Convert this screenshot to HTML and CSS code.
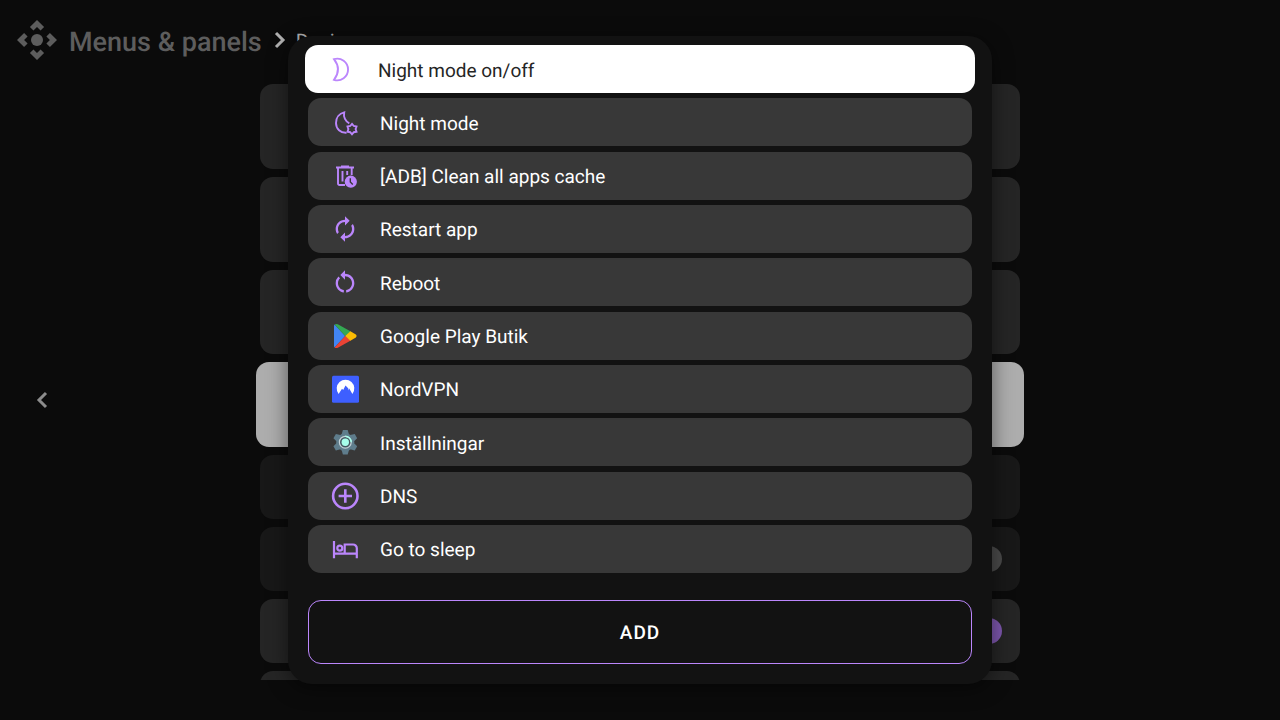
FILE: index.html
```html
<!DOCTYPE html>
<html lang="sv">
<head>
    <meta charset="UTF-8">
    <meta name="viewport" content="width=device-width, initial-scale=1.0">
    <title>Menus &amp; panels</title>
    <link rel="stylesheet" href="styles.css">
</head>
<body>
    <!-- Page behind the dialog -->
    <header class="header">
        <svg class="header-icon" viewBox="0 0 24 24" aria-hidden="true">
            <path d="M15.54 5.54L13.77 7.3 12 5.54 10.23 7.3 8.46 5.54 12 2zm2.92 10l-1.76-1.77L18.46 12l-1.76-1.77 1.76-1.77L22 12zm-10 2.92l1.77-1.76L12 18.46l1.77-1.76 1.77 1.76L12 22zm-2.92-10l1.76 1.77L5.54 12l1.76 1.77-1.76 1.77L2 12z"/>
            <circle cx="12" cy="12" r="3"/>
        </svg>
        <span class="header-title">Menus &amp; panels</span>
        <svg class="header-arrow" viewBox="0 0 12 18" aria-hidden="true"><path d="M2 2l7 7-7 7"/></svg>
        <span class="header-page">Design</span>
    </header>

    <button class="back" aria-label="Back">
        <svg viewBox="0 0 12 18" aria-hidden="true"><path d="M10 2L3 9l7 7"/></svg>
    </button>

    <main class="settings">
        <div class="settings-top">
            <div class="row"></div>
            <div class="row"></div>
            <div class="row"></div>
            <div class="row selected"></div>
        </div>
        <div class="row small disabled"></div>
        <div class="row small disabled"><span class="knob"></span></div>
        <div class="row small"><span class="knob on"></span></div>
        <div class="row small"></div>
    </main>

    <!-- Dialog -->
    <div class="overlay">
        <div class="dialog" role="dialog">
            <div class="list">
                <button class="item focused">
                    <svg class="icon line" viewBox="0 0 32 32" aria-hidden="true">
                        <path d="M7 6.2A10.8 10.8 0 1 1 7 26.8Q15 16.5 7 6.2z"/>
                    </svg>
                    <span>Night mode on/off</span>
                </button>
                <button class="item">
                    <svg class="icon line" viewBox="0 0 32 32" aria-hidden="true">
                        <path d="M17.5 26.8C11.5 27.1 7 23 7 17C7 11.8 10.3 7.5 15.2 6.3C14.2 11 16.5 15.5 20.3 17.3"/>
                        <path d="M23 17.9l1.8 2.1 2.7.5-.9 2.6.9 2.6-2.7.5-1.8 2.1-1.8-2.1-2.7-.5.9-2.6-.9-2.6 2.7-.5z"/>
                    </svg>
                    <span>Night mode</span>
                </button>
                <button class="item">
                    <svg class="icon line" viewBox="0 0 32 32" aria-hidden="true">
                        <path d="M7 7.5h18M12 6.4h8M9 7.5V23.5a1.5 1.5 0 0 0 1.5 1.5H16M22.7 7.5V15M13.5 11v10.5M18.2 11v4"/>
                        <circle class="fill" cx="21.8" cy="21.7" r="6.1"/>
                        <path class="hands" d="M21.3 18.3v3.6l2.5 2.6"/>
                    </svg>
                    <span>[ADB] Clean all apps cache</span>
                </button>
                <button class="item">
                    <svg class="icon small-icon" viewBox="0 0 24 24" aria-hidden="true">
                        <path class="fill" d="M12 6v3l4-4-4-4v3c-4.42 0-8 3.58-8 8 0 1.57.46 3.03 1.24 4.26L6.7 14.8A5.87 5.87 0 0 1 6 12c0-3.31 2.69-6 6-6zm6.76 1.74L17.3 9.2c.44.84.7 1.79.7 2.8 0 3.31-2.69 6-6 6v-3l-4 4 4 4v-3c4.42 0 8-3.58 8-8 0-1.57-.46-3.03-1.24-4.26z"/>
                    </svg>
                    <span>Restart app</span>
                </button>
                <button class="item">
                    <svg class="icon small-icon" viewBox="0 0 24 24" aria-hidden="true">
                        <path class="fill" d="M12 5V2L8 6l4 4V7c3.31 0 6 2.69 6 6 0 2.97-2.17 5.43-5 5.91v2.02c3.95-.49 7-3.85 7-7.93 0-4.42-3.58-8-8-8zm-6 8c0-1.65.67-3.15 1.76-4.24L6.34 7.34A8.014 8.014 0 0 0 4 13c0 4.08 3.05 7.44 7 7.93v-2.02c-2.83-.48-5-2.94-5-5.91z"/>
                    </svg>
                    <span>Reboot</span>
                </button>
                <button class="item">
                    <svg class="icon" viewBox="0 0 32 32" aria-hidden="true">
                        <path fill="#4285f4" d="M5.6 4.6Q5 5.2 5 6.2V25.8Q5 26.8 5.6 27.4L16.2 16z"/>
                        <path fill="#34a853" d="M16.2 16L5.6 4.6Q7 3.4 8.8 4.3L21.8 11.6z"/>
                        <path fill="#ea4335" d="M16.2 16L5.6 27.4Q7 28.6 8.8 27.7L21.8 20.4z"/>
                        <path fill="#fbbc04" d="M16.2 16l5.1-4.7 5.2 3q2.2 1.7 0 3.4l-5.2 3z"/>
                    </svg>
                    <span>Google Play Butik</span>
                </button>
                <button class="item">
                    <svg class="icon" viewBox="0 0 32 32" aria-hidden="true">
                        <rect x="3" y="2.7" width="27" height="27" rx="1.5" fill="#3e5fff"/>
                        <path fill="#fff" d="M9.6 20.9A8.8 8.8 0 1 1 23.4 20.9L20.2 15.6l-1.1 1.9.3-2-2.9-3.1-2.3 4.5-1.2-1.2z"/>
                    </svg>
                    <span>NordVPN</span>
                </button>
                <button class="item">
                    <svg class="icon" viewBox="0 0 32 32" aria-hidden="true">
                        <g fill="#5f7d8c">
                            <circle cx="16.3" cy="16.2" r="9"/>
                            <path id="tooth" d="M12.6 8.4l1.3-4.5h4.8L20 8.4v15.6l-1.3 4.5h-4.8l-1.3-4.5z"/>
                            <use href="#tooth" transform="rotate(60 16.3 16.2)"/>
                            <use href="#tooth" transform="rotate(120 16.3 16.2)"/>
                        </g>
                        <circle cx="16.3" cy="16.2" r="5.9" fill="#455a64" stroke="#c5d3d8" stroke-width="1.2"/>
                        <path d="M16.3 10.3a5.9 5.9 0 0 1 5.9 5.9" fill="none" stroke="#a7ffeb" stroke-width="1.4"/>
                        <circle cx="16.3" cy="16.2" r="3.7" fill="#a7ffeb"/>
                    </svg>
                    <span>Inställningar</span>
                </button>
                <button class="item">
                    <svg class="icon line thick" viewBox="0 0 32 32" aria-hidden="true">
                        <circle cx="16.3" cy="16" r="12.2"/>
                        <path d="M16.3 9.3v13.4M9.6 16H23"/>
                    </svg>
                    <span>DNS</span>
                </button>
                <button class="item">
                    <svg class="icon line bed" viewBox="0 0 32 32" aria-hidden="true">
                        <path d="M5 8v17.3M5 20.7h22.8M15.7 20.7V11.5H24a3.8 3.8 0 0 1 3.8 3.8v10"/>
                        <circle cx="10.8" cy="15.2" r="2.5"/>
                    </svg>
                    <span>Go to sleep</span>
                </button>
            </div>
            <button class="add">ADD</button>
        </div>
    </div>
</body>
</html>
```

FILE: styles.css
```css
* {
    box-sizing: border-box;
}

body {
    margin: 0;
    min-height: 100vh;
    background: #0b0b0b;
    color: #fff;
    font-family: Roboto, "Noto Sans", sans-serif;
    text-rendering: geometricPrecision;
    overflow: hidden;
}

button {
    border: 0;
    padding: 0;
    background: none;
    color: inherit;
    font: inherit;
    text-align: left;
    text-rendering: inherit;
    cursor: pointer;
    outline: none;
}

/* header */
.header {
    display: flex;
    align-items: center;
    height: 84px;
    padding: 0 0 4px 13px;
    color: #5d5d5d;
}

.header-icon {
    width: 48px;
    height: 48px;
    margin-right: 8px;
    fill: #5d5d5d;
}

.header-title {
    font-size: 27px;
    font-weight: 500;
    line-height: 32px;
    padding-top: 3px;
}

.header-arrow,
.back svg {
    width: 12px;
    height: 18px;
    fill: none;
    stroke: #b0b0b0;
    stroke-width: 3;
}

.header-arrow {
    margin: 0 10px 0 12px;
}

.header-page {
    padding-top: 2px;
    color: #b0b0b0;
    font-size: 20px;
}

.back {
    position: absolute;
    top: 50%;
    left: 24px;
    width: 36px;
    height: 80px;
    display: flex;
    align-items: center;
    justify-content: center;
}

.back svg {
    stroke: #8c8c8c;
}

/* settings list behind the dialog */
.settings {
    display: flex;
    flex-direction: column;
    gap: 8px;
    width: 60%;
    height: calc(100vh - 124px);
    margin: 0 auto;
    padding: 0 4px;
    overflow: hidden;
}

.settings-top {
    display: grid;
    grid-auto-rows: 1fr;
    gap: 8px;
    height: 363px;
    flex-shrink: 0;
}

.row {
    display: flex;
    align-items: center;
    justify-content: flex-end;
    padding-right: 18px;
    border-radius: 13px;
    background: #252525;
}

.row.small {
    height: 64px;
    flex-shrink: 0;
}

.row.disabled {
    background: #181818;
}

.row.selected {
    margin: 0 -4px;
    background: #adadad;
}

.knob {
    width: 26px;
    height: 26px;
    border-radius: 50%;
    background: #4a4a4a;
}

.knob.on {
    background: #7e57ae;
}

/* dialog */
.overlay {
    position: absolute;
    inset: 0;
    display: flex;
    align-items: center;
    justify-content: center;
}

.dialog {
    width: 55%;
    padding: 9px 20px 20px;
    border-radius: 24px;
    background: #121212;
    box-shadow: 0 4px 20px rgba(0, 0, 0, 0.5);
}

.list {
    display: flex;
    flex-direction: column;
    justify-content: space-between;
    height: 528px;
    margin-bottom: 27px;
}

.item {
    display: flex;
    align-items: center;
    gap: 19px;
    height: 48px;
    padding: 0 21px;
    border-radius: 13px;
    background: #383838;
    font-size: 19px;
    line-height: 24px;
}

.item span {
    padding-top: 3px;
}

.item.focused {
    margin: 0 -3px;
    padding: 0 22px;
    background: #fff;
    color: #252525;
}

.icon {
    width: 32px;
    height: 32px;
    flex-shrink: 0;
}

.small-icon {
    width: 28px;
    height: 28px;
    margin: 0 2px;
}

.fill,
.line .fill {
    fill: #bb86fc;
    stroke: none;
}

.line {
    fill: none;
    stroke: #bb86fc;
    stroke-width: 1.9;
}

.line.thick {
    stroke-width: 2.6;
}

.line.bed {
    stroke-width: 2.2;
}

.hands {
    stroke: #383838;
    stroke-width: 1.4;
}

.add {
    display: block;
    width: 100%;
    height: 64px;
    border: 1px solid #bb86fc;
    border-radius: 13px;
    font-size: 19px;
    font-weight: 500;
    letter-spacing: 1px;
    text-align: center;
}
```
